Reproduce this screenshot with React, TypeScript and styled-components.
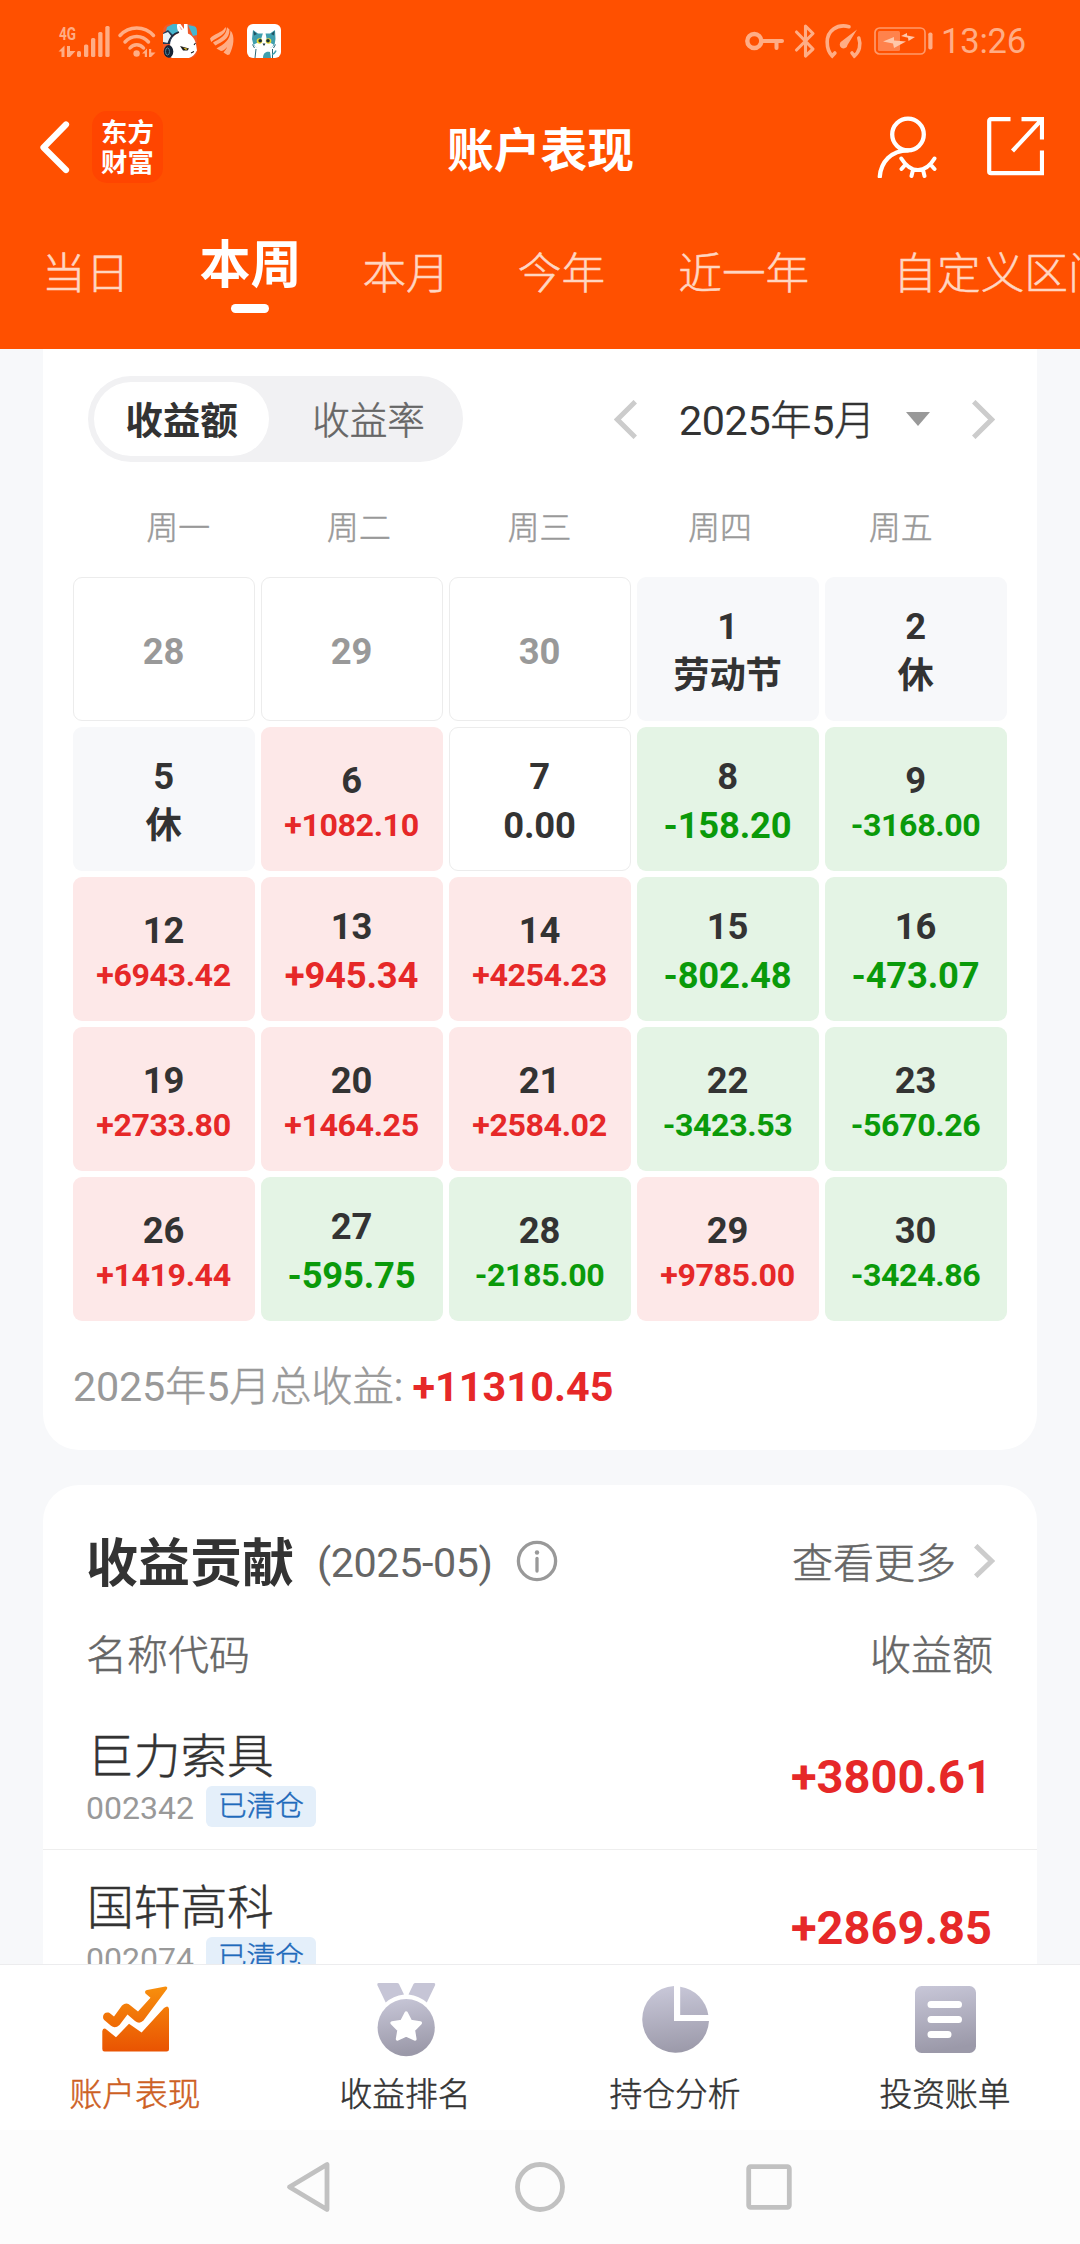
import React from "react";
import styled, { createGlobalStyle, css } from "styled-components";

const Global = createGlobalStyle`
  * { box-sizing: border-box; }
  html, body { margin: 0; padding: 0; }
  body {
    font-family: Roboto, "Noto Sans CJK SC", sans-serif;
    color: #333;
    background: #f7f8fa;
  }
`;

/* light Han strokes, thickened a little */
const hanText = css`
  font-weight: 300;
  -webkit-text-stroke: 0.5px currentColor;
`;

const Screen = styled.div`
  width: 1080px;
  height: 2244px;
  display: flex;
  flex-direction: column;
  overflow: hidden;
  background: #f7f8fa;
`;

/* ---------- header ---------- */

const Header = styled.header`
  flex: none;
  height: 349px;
  background: #ff5000;
  color: #fff;
`;

const StatusBar = styled.div`
  height: 80px;
  padding: 22px 54px 0 58px;
  display: flex;
  justify-content: space-between;
  align-items: flex-start;
  color: #ffad85;
`;

const StatusGroup = styled.div<{ $gap: number }>`
  display: flex;
  align-items: center;
  height: 38px;
  gap: ${(p) => p.$gap}px;
  svg { display: block; flex: none; overflow: visible; }
`;

const Clock = styled.span`
  margin-left: -2px;
  font-size: 34.5px;
  line-height: 38px;
  font-weight: 400;
  letter-spacing: -0.2px;
`;

const TitleBar = styled.div`
  height: 134px;
  padding: 0 36px 0 39px;
  display: grid;
  grid-template-columns: 1fr auto 1fr;
  align-items: center;
`;

const TitleLeft = styled.div`
  display: flex;
  align-items: center;
  gap: 22px;
  svg { display: block; }
`;

const BrandLogo = styled.div`
  width: 71px;
  height: 72px;
  border-radius: 15px;
  background: #ff4500;
  font-size: 26.4px;
  line-height: 30px;
  font-weight: 700;
  padding-top: 7px;
  display: flex;
  flex-direction: column;
  align-items: center;
`;

const PageTitle = styled.h1`
  margin: 0;
  padding: 8px 2px 0 0;
  font-size: 46.7px;
  line-height: 60px;
  font-weight: 700;
`;

const TitleActions = styled.div`
  display: flex;
  justify-content: flex-end;
  gap: 49px;
  svg { display: block; }
`;

const Tabs = styled.nav`
  height: 135px;
  padding-left: 42px;
  display: flex;
  align-items: flex-start;
  overflow: hidden;
`;

const Tab = styled.div<{ $active?: boolean; $after: number }>`
  flex: none;
  margin-right: ${(p) => p.$after}px;
  padding-top: ${(p) => (p.$active ? 22 : 30)}px;
  display: flex;
  flex-direction: column;
  align-items: center;
  line-height: 60px;
  white-space: nowrap;
  ${(p) =>
    p.$active
      ? css`font-size: 51px; font-weight: 700; color: #fff;`
      : css`font-size: 43.7px; color: #ffd6c2; ${hanText}`}
`;

const TabMark = styled.i`
  width: 38px;
  height: 9px;
  margin-top: 8px;
  border-radius: 5px;
  background: #fff;
`;

/* ---------- content ---------- */

const Content = styled.main`
  flex: none;
  height: 1615px;
  padding: 0 43px;
  overflow: hidden;
`;

const CalendarCard = styled.section`
  height: 1101px;
  padding: 27px 30px 0;
  background: #fff;
  border-radius: 0 0 36px 36px;
`;

const Toolbar = styled.div`
  height: 86px;
  padding: 0 12px 0 15px;
  display: flex;
  align-items: center;
  justify-content: space-between;
`;

const Segment = styled.div`
  width: 375px;
  height: 86px;
  padding: 6px;
  display: flex;
  border-radius: 43px;
  background: #f1f1f3;
`;

const SegmentItem = styled.div<{ $active?: boolean }>`
  width: ${(p) => (p.$active ? 175 : 188)}px;
  padding: ${(p) => (p.$active ? 0 : "0 0 0 11px")};
  flex: none;
  line-height: 78px;
  text-align: center;
  border-radius: 37px;
  font-size: 37.6px;
  ${(p) =>
    p.$active
      ? css`background: #fff; color: #333; font-weight: 700;`
      : css`color: #666; ${hanText}`}
`;

const MonthPicker = styled.div`
  display: flex;
  align-items: center;
  svg { display: block; flex: none; }
`;

const MonthLabel = styled.div`
  width: 197px;
  margin: 4px 30px 0 42px;
  font-size: 41.3px;
  line-height: 56px;
  letter-spacing: -0.4px;
  white-space: nowrap;
`;

const NextMonth = styled.div`
  margin-left: 42px;
`;

const Han = styled.span`
  ${hanText}
`;

const Weekdays = styled.div`
  margin: 44px 16px 0 15px;
  display: grid;
  grid-template-columns: repeat(5, 1fr);
  text-align: center;
  font-size: 31.8px;
  line-height: 44px;
  color: #999;
  ${hanText}
`;

const DayGrid = styled.div`
  margin-top: 27px;
  display: grid;
  grid-template-columns: repeat(5, 182px);
  grid-auto-rows: 144px;
  gap: 6px;
`;

type Kind = "out" | "rest" | "flat" | "up" | "down";

const cellLook = {
  out: css`background: #fff; border: 1px solid #ececec; color: #999;`,
  flat: css`background: #fff; border: 1px solid #ececec; color: #333;`,
  rest: css`background: #f7f8fa; color: #333;`,
  up: css`background: #fde8e8; color: #e62828;`,
  down: css`background: #e4f4e5; color: #0a9a0a;`,
};

const DayCell = styled.div<{ $kind: Kind }>`
  border: 1px solid transparent;
  background-clip: border-box;
  border-radius: 9px;
  padding: 5px 1px 0 0;
  display: flex;
  flex-direction: column;
  align-items: center;
  justify-content: center;
  font-weight: 700;
  ${(p) => cellLook[p.$kind]}
`;

const DayNumber = styled.div<{ $muted: boolean }>`
  font-size: 36.4px;
  line-height: 49px;
  letter-spacing: -0.2px;
  color: ${(p) => (p.$muted ? "#999" : "#333")};
`;

const DayValue = styled.div<{ $small: boolean }>`
  margin-top: ${(p) => (p.$small ? -3 : 0)}px;
  font-size: ${(p) => (p.$small ? 32.2 : 36.4)}px;
  line-height: ${(p) => (p.$small ? 46 : 50)}px;
  letter-spacing: ${(p) => (p.$small ? -0.4 : -0.2)}px;
  white-space: nowrap;
`;

const Summary = styled.div`
  margin-top: 41px;
  font-size: 41.3px;
  line-height: 50px;
  letter-spacing: -0.2px;
  color: #999;
  white-space: nowrap;
`;

const SummaryValue = styled.span`
  margin-left: 9px;
  font-weight: 700;
  letter-spacing: 0.1px;
  color: #e62828;
`;

const ContributionCard = styled.section`
  margin-top: 35px;
  height: 600px;
  padding-top: 48px;
  background: #fff;
  border-radius: 36px 36px 0 0;
`;

const CardHead = styled.div`
  height: 60px;
  padding: 0 42px 0 43px;
  display: flex;
  align-items: center;
  line-height: 60px;
  svg { display: block; flex: none; margin-bottom: 4px; }
`;

const CardTitle = styled.h2`
  margin: 3px 23px 0 0;
  font-size: 52px;
  font-weight: 700;
`;

const Period = styled.span`
  margin-right: 23px;
  font-size: 41.3px;
  letter-spacing: -0.4px;
  color: #666;
`;

const More = styled.span`
  margin: 2px 18px 0 auto;
  font-size: 41px;
  color: #666;
  ${hanText}
`;

const ColumnLabels = styled.div`
  margin: 38px 44px 18px 43px;
  display: flex;
  justify-content: space-between;
  font-size: 41px;
  line-height: 50px;
  color: #666;
  ${hanText}
`;

const StockRow = styled.div`
  height: 151px;
  padding: 30px 45px 22px 43px;
  display: flex;
  align-items: center;
  justify-content: space-between;
  border-bottom: 1px solid #eee;
`;

const StockName = styled.div`
  padding-left: 1px;
  font-size: 46.7px;
  line-height: 56px;
  ${hanText}
`;

const StockMeta = styled.div`
  margin-top: 1px;
  display: flex;
  align-items: center;
  gap: 12px;
`;

const StockCode = styled.span`
  padding-top: 3px;
  font-size: 32px;
  line-height: 38px;
  color: #999;
`;

const ClosedTag = styled.span`
  width: 110px;
  height: 41px;
  border-radius: 6px;
  background: #e4effa;
  color: #1f6abb;
  font-size: 28.7px;
  line-height: 41px;
  text-align: center;
  ${hanText}
`;

const StockGain = styled.div`
  margin-bottom: 3px;
  font-size: 47px;
  line-height: 56px;
  font-weight: 700;
  color: #e62828;
`;

/* ---------- bottom bars ---------- */

const BottomNav = styled.nav`
  flex: none;
  height: 166px;
  border-top: 1px solid #ececee;
  background: #fff;
  display: grid;
  grid-template-columns: repeat(4, 1fr);
`;

const NavItem = styled.div<{ $active?: boolean }>`
  display: flex;
  flex-direction: column;
  align-items: center;
  font-size: 32.8px;
  line-height: 44px;
  color: ${(p) => (p.$active ? "#cd6023" : "#333")};
  ${hanText}
`;

const NavIcon = styled.div<{ $top: number }>`
  height: 90px;
  margin-bottom: 18px;
  padding-top: ${(p) => p.$top}px;
  svg { display: block; overflow: visible; }
`;

const SystemNav = styled.div`
  flex: none;
  height: 114px;
  padding-right: 3px;
  background: #fcfcfc;
  display: flex;
  align-items: center;
  justify-content: center;
  svg { display: block; }
`;

const SystemKey = styled.div<{ $before?: number }>`
  margin-left: ${(p) => p.$before ?? 0}px;
`;

/* ---------- drawings ---------- */

const SignalIcon = () => (
  <svg width="52" height="34" viewBox="0 0 52 34" fill="currentColor">
    <text x="1" y="16" fontFamily="Roboto" fontWeight="700" fontSize="19" textLength="17" lengthAdjust="spacingAndGlyphs">4G</text>
    <path d="M.5 27.500 6.500 21.500V33H3.500v-5.500zM9 22h3v5h5.500L12 33H9z" />
    <rect x="19" y="27" width="4" height="6" rx="1.500" />
    <rect x="26" y="20.500" width="4.300" height="12.500" rx="1.500" />
    <rect x="33" y="14" width="4.300" height="19" rx="1.500" />
    <rect x="40.200" y="8" width="4.300" height="25" rx="1.500" />
    <rect x="47.300" y="2" width="4.300" height="31" rx="1.500" />
  </svg>
);

const WifiIcon = () => (
  <svg width="37" height="34" viewBox="0 0 37 34" fill="none" stroke="currentColor" strokeWidth="3.500" strokeLinecap="round">
    <path d="M2 11.500C11 1.500 26.500 1.500 35.500 11.500" />
    <path d="M7 18c6.500-7.500 17-7.500 23.500 0" />
    <path d="M12 24c3.500-4.500 10-4.500 13.500 0" />
    <circle cx="18.600" cy="29.500" r="3.200" fill="currentColor" stroke="none" />
    <path d="M24 29.500 29 24.500V33h-2.200v-3.500zM31 25h2.200v3.500H37.500L33 33H31z" fill="currentColor" stroke="none" />
  </svg>
);

const RabbitIcon = () => (
  <svg width="34" height="34" viewBox="0 0 34 34">
    <defs>
      <clipPath id="rabbitClip"><rect width="34" height="34" rx="7" /></clipPath>
    </defs>
    <g clipPath="url(#rabbitClip)">
      <rect width="34" height="34" fill="#ee5a2c" />
      <path d="M4 3 10 0h4l1 8-7 4-5-5zM25 1l9 2v8l-4 1z" fill="#46b6cf" />
      <path d="M0 9 5 6l6 6-3 8H0z" fill="#273a55" />
      <path d="M0 10 5 8l4 5-4 6-5-1z" fill="#e9f2f5" />
      <path d="M16 10C15 7 13 2 14.500 0h3L21 5V0h3.500l.5 10z" fill="#fff" />
      <path d="M18 6 16 1.500l3.500 4z" fill="#f1a9a4" />
      <path d="M7 22C7 13 13 8.500 20 8.500c7 0 12 5 13 12l1 6c-3 6-7 8-12 8H9c-3-4-2-9-2-12.500z" fill="#fff" />
      <path d="M5 20c2-8 6-10.500 11-12" fill="none" stroke="#1d2b3e" strokeWidth="1.500" />
      <ellipse cx="5.500" cy="27.500" rx="4.800" ry="6.500" fill="#172536" />
      <ellipse cx="4.500" cy="27.500" rx="2" ry="3.600" fill="none" stroke="#4c8198" strokeWidth="1" />
      <path d="M17 22 26 24.500 24.500 26.500H20z" fill="#1b1b1b" />
      <path d="M20 23.500 24.500 24.700 23 26z" fill="#f2cf2b" />
      <path d="M31 21l1.500-2M28 29l3-1.500" stroke="#1b1b1b" strokeWidth="1.100" />
    </g>
  </svg>
);

const WingIcon = () => (
  <svg width="24" height="28" viewBox="0 0 24 28" fill="currentColor">
    <path d="M0 11.500C4 6.500 12 6 15 .800L16 .300C16.500 8 8 9.500 1.200 15z" />
    <path d="M3 15.500C10 11.500 16 9.500 17 .300L19.500 2.500C19.500 12.500 12 14.500 5.500 18.500L4 17z" />
    <path d="M6.500 21.500C14 17 20 13.500 20.500 3.500 25.500 9 23.500 20 19.500 27.500L17.500 28 13.500 25.500C15 23.500 16.500 22 17 20c-2 2.500-4 4-6 4z" />
  </svg>
);

const CatIcon = () => (
  <svg width="34" height="34" viewBox="0 0 34 34">
    <rect width="34" height="34" rx="6" fill="#fff" />
    <path d="M6 6l5 3.500h12L28 6l.5 9-1 6-4 3h-13l-4-3L5 15z" fill="#3f9fae" />
    <path d="M6.500 7 10 10l-3 1.500zM27.500 7 24 10l3 1.500z" fill="#1f5364" />
    <path d="M16 9h2.500l1.500 8 6.500 3.500C25 24.500 21 25 17 25s-8-.5-10-4.500l6.500-3.500z" fill="#fff" />
    <circle cx="12.500" cy="17" r="2.800" fill="#e6d83a" />
    <circle cx="21.500" cy="17" r="2.800" fill="#e6d83a" />
    <circle cx="13.200" cy="16.800" r="1.800" fill="#172e38" />
    <circle cx="21" cy="16.800" r="1.800" fill="#172e38" />
    <path d="M15.500 19.500h3L17 22z" fill="#172e38" />
    <path d="M5.500 20.500l2 3.500M28.500 20.500l-2 3.500M9 25l-1 9M25.500 25v9" stroke="#2d6877" strokeWidth="1" fill="none" />
    <path d="M16 34c0-5 3-7 7-6l1 6z" fill="#3f9fae" />
    <path d="M25 30.500c3-1 3-2 4-4" stroke="#3f9fae" strokeWidth="1.500" fill="none" />
  </svg>
);

const KeyIcon = () => (
  <svg width="39" height="20" viewBox="0 0 39 20" fill="none" stroke="currentColor" strokeWidth="4.400">
    <circle cx="9.300" cy="10" r="7" />
    <path d="M17 10h20" strokeLinecap="round" strokeWidth="4" />
    <path d="M31.500 10v7" strokeLinecap="round" strokeWidth="4" />
  </svg>
);

const BluetoothIcon = () => (
  <svg width="20" height="34" viewBox="0 0 20 34" fill="none" stroke="currentColor" strokeWidth="3.100" strokeLinejoin="round" strokeLinecap="round">
    <path d="M1.500 8 18 25l-7.500 7V2L18 9.500 1.500 26" />
  </svg>
);

const GaugeIcon = () => (
  <svg width="38" height="36" viewBox="0 0 38 36" fill="none" stroke="currentColor" strokeWidth="3.600" strokeLinecap="round">
    <path d="M24 3.700C12 .500 2.200 8 2.200 19c0 6 2 11 5 14l2.700-3" />
    <path d="M33.800 15c2.500 7 .5 14-4.500 18l-2.300-3" />
    <path d="M32 6.500 22.500 22a3.900 3.900 0 1 1-5.500-4z" fill="currentColor" stroke="none" />
  </svg>
);

const BatteryIcon = () => (
  <svg width="59" height="28" viewBox="0 0 59 28">
    <rect x="1" y="1" width="50" height="26" rx="4.500" fill="none" stroke="#ff9a6a" strokeWidth="1.700" />
    <rect x="4" y="4" width="22" height="20" rx="1.500" fill="#ff824c" />
    <path d="M9 14.500 20 10v3.500l12 1L20 21l-1-4.500zM27 9l6-3v2.500l8 1.500-6.500 4-.5-3.200z" fill="#ffc7aa" />
    <rect x="54.300" y="5.500" width="4.200" height="17" rx="1.800" fill="currentColor" />
  </svg>
);

const BackIcon = () => (
  <svg width="31" height="54" viewBox="0 0 31 54" fill="none" stroke="#fff" strokeWidth="6.200" strokeLinecap="round" strokeLinejoin="round">
    <path d="M27 4.500 4.500 27.500 27 50" />
  </svg>
);

const HiddenUserIcon = () => (
  <svg width="60" height="62" viewBox="0 0 60 62" fill="none" stroke="#fff" strokeWidth="4.300" strokeLinecap="round">
    <circle cx="31" cy="18.500" r="15.800" />
    <path d="M31 34.300C14 34.500 4 46 2.800 60.500" />
    <path d="M24.300 42.500C29 50 34 54 41 54s12-4 16.500-11.500M28.500 48.500l-4 4.500M36 54l-1.500 6M46 54l1.500 6M53.500 48.500l4 4.500" strokeWidth="4" />
  </svg>
);

const ShareIcon = () => (
  <svg width="58" height="60" viewBox="0 0 58 60" fill="none" stroke="#fff" strokeWidth="4.200">
    <path d="M24.500 3.200H5Q3.200 3.200 3.200 5v50.500Q3.200 57.200 5 57.200h51V34.500M35.500 3.200H56V23.500M56 3.200 26.500 35" />
  </svg>
);

const Chevron = ({ h, w, flip }: { h: number; w: number; flip?: boolean }) => (
  <svg width={w} height={h} viewBox={`0 0 ${w} ${h}`} fill="none" stroke="#ccc" strokeWidth="5">
    <path
      d={
        flip
          ? `M${w - 1.7} 1.7 3.4 ${h / 2} ${w - 1.7} ${h - 1.7}`
          : `M1.7 1.7 ${w - 3.4} ${h / 2} 1.7 ${h - 1.7}`
      }
    />
  </svg>
);

const CaretDown = () => (
  <svg width="24" height="14" viewBox="0 0 24 14">
    <path d="M0 0h24L12 14z" fill="#999" />
  </svg>
);

const InfoIcon = () => (
  <svg width="42" height="42" viewBox="0 0 42 42" fill="none" stroke="#999" strokeWidth="3.300">
    <circle cx="21" cy="21" r="18.600" />
    <circle cx="21" cy="12.500" r="2.200" fill="#999" stroke="none" />
    <path d="M21 18.500v12.500" strokeLinecap="round" />
  </svg>
);

const GreyFade = ({ id }: { id: string }) => (
  <defs>
    <linearGradient id={id} x1="0" y1="0" x2="0.15" y2="1">
      <stop offset="0" stopColor="#c8c7d8" />
      <stop offset="1" stopColor="#9b99a9" />
    </linearGradient>
  </defs>
);

const TrendIcon = () => (
  <svg width="67" height="66" viewBox="0 0 67 66" fill="url(#trendFade)">
    <defs>
      <linearGradient id="trendFade" gradientUnits="userSpaceOnUse" x1="33" y1="0" x2="33" y2="66">
        <stop offset="0" stopColor="#f8900d" />
        <stop offset="1" stopColor="#e95302" />
      </linearGradient>
    </defs>
    <path d="M1 31C1 28 4 25.500 7.600 27L12 30.500 20 19.500Q24.500 15.500 28.500 19.500L36 25.500 48.500 11.700 43.500 7.500Q42 5 45 4L63.500.500Q66 .500 65 3L41.500 34.500Q37.500 38.500 33 35L25.500 28.500 17.500 39Q13 43 9 39.700L2.200 34Q1 33 1 31z" />
    <path d="M.3 45Q1 42 3.500 42.700L14 51.300 27 37.700 39.600 46.500 62 22Q66.500 18.500 67 23V63Q67 65.500 64.500 65.500H2.500Q.3 65.500.3 63z" />
  </svg>
);

const MedalIcon = () => (
  <svg width="57" height="73" viewBox="1 0 57 73">
    <GreyFade id="medalFade" />
    <path d="M2.500 0H21Q22.500 0 23 1L28 11.500Q17 13 9.700 19.500L1.300 2Q1 0 2.500 0zM58 0H39.500Q38 0 37.500 1L32.500 11.500Q43.500 13 50.800 19.500L59.200 2Q59.500 0 58 0z" fill="#c6c5d6" />
    <circle cx="30.200" cy="44.600" r="28.600" fill="url(#medalFade)" />
    <path d="M30.200 30 34.600 38.500 44.300 40 37.400 47 38.900 56 30.200 52 21.500 56 23 47 16.100 40 25.800 38.500z" fill="#fff" stroke="#fff" strokeWidth="3.400" strokeLinejoin="round" />
  </svg>
);

const PieIcon = () => (
  <svg width="67" height="67" viewBox="0 0 67 67" fill="url(#pieFade)">
    <defs>
      <linearGradient id="pieFade" gradientUnits="userSpaceOnUse" x1="30" y1="0" x2="38" y2="67">
        <stop offset="0" stopColor="#c8c7d8" />
        <stop offset="1" stopColor="#9b99a9" />
      </linearGradient>
    </defs>
    <path d="M32 0A33.400 33.400 0 1 0 67 35H32z" />
    <path d="M38.200.700A33.400 33.400 0 0 1 66.300 29H38.200z" />
  </svg>
);

const BillIcon = () => (
  <svg width="61" height="67" viewBox="0 0 61 67">
    <GreyFade id="billFade" />
    <rect width="61" height="67" rx="6.500" fill="url(#billFade)" />
    <path d="M16 18.500h27.500M16 33.500h27.500M16 48.500h17" stroke="#fff" strokeWidth="7" strokeLinecap="round" />
  </svg>
);

/* ---------- data ---------- */

const tabs = [
  { label: "当日", after: 70 },
  { label: "本周", after: 61, active: true },
  { label: "本月", after: 68 },
  { label: "今年", after: 73 },
  { label: "近一年", after: 84 },
  { label: "自定义区间", after: 0 },
];

const days: [string, string, Kind][] = [
  ["28", "", "out"], ["29", "", "out"], ["30", "", "out"], ["1", "劳动节", "rest"], ["2", "休", "rest"],
  ["5", "休", "rest"], ["6", "+1082.10", "up"], ["7", "0.00", "flat"], ["8", "-158.20", "down"], ["9", "-3168.00", "down"],
  ["12", "+6943.42", "up"], ["13", "+945.34", "up"], ["14", "+4254.23", "up"], ["15", "-802.48", "down"], ["16", "-473.07", "down"],
  ["19", "+2733.80", "up"], ["20", "+1464.25", "up"], ["21", "+2584.02", "up"], ["22", "-3423.53", "down"], ["23", "-5670.26", "down"],
  ["26", "+1419.44", "up"], ["27", "-595.75", "down"], ["28", "-2185.00", "down"], ["29", "+9785.00", "up"], ["30", "-3424.86", "down"],
];

const stocks = [
  { name: "巨力索具", code: "002342", gain: "+3800.61" },
  { name: "国轩高科", code: "002074", gain: "+2869.85" },
];

const navItems = [
  { label: "账户表现", icon: <TrendIcon />, active: true, top: 21 },
  { label: "收益排名", icon: <MedalIcon />, top: 18 },
  { label: "持仓分析", icon: <PieIcon />, top: 21 },
  { label: "投资账单", icon: <BillIcon />, top: 21 },
];

export default function App() {
  return (
    <Screen>
      <Global />
      <Header>
        <StatusBar>
          <StatusGroup $gap={8}>
            <SignalIcon />
            <WifiIcon />
            <StatusGroup $gap={13}>
              <RabbitIcon />
              <WingIcon />
              <CatIcon />
            </StatusGroup>
          </StatusGroup>
          <StatusGroup $gap={10.5}>
            <KeyIcon />
            <BluetoothIcon />
            <GaugeIcon />
            <BatteryIcon />
            <Clock>13:26</Clock>
          </StatusGroup>
        </StatusBar>
        <TitleBar>
          <TitleLeft>
            <BackIcon />
            <BrandLogo>
              <span>东方</span>
              <span>财富</span>
            </BrandLogo>
          </TitleLeft>
          <PageTitle>账户表现</PageTitle>
          <TitleActions>
            <HiddenUserIcon />
            <ShareIcon />
          </TitleActions>
        </TitleBar>
        <Tabs>
          {tabs.map((t) => (
            <Tab key={t.label} $active={t.active} $after={t.after}>
              {t.label}
              {t.active && <TabMark />}
            </Tab>
          ))}
        </Tabs>
      </Header>

      <Content>
        <CalendarCard>
          <Toolbar>
            <Segment>
              <SegmentItem $active>收益额</SegmentItem>
              <SegmentItem>收益率</SegmentItem>
            </Segment>
            <MonthPicker>
              <Chevron w={23} h={39} flip />
              <MonthLabel>
                2025<Han>年</Han>5<Han>月</Han>
              </MonthLabel>
              <CaretDown />
              <NextMonth>
                <Chevron w={23} h={39} />
              </NextMonth>
            </MonthPicker>
          </Toolbar>
          <Weekdays>
            {["周一", "周二", "周三", "周四", "周五"].map((d) => (
              <span key={d}>{d}</span>
            ))}
          </Weekdays>
          <DayGrid>
            {days.map(([day, value, kind], i) => (
              <DayCell key={i} $kind={kind}>
                <DayNumber $muted={kind === "out"}>{day}</DayNumber>
                {value && <DayValue $small={value.length > 7}>{value}</DayValue>}
              </DayCell>
            ))}
          </DayGrid>
          <Summary>
            2025<Han>年</Han>5<Han>月总收益</Han>:<SummaryValue>+11310.45</SummaryValue>
          </Summary>
        </CalendarCard>

        <ContributionCard>
          <CardHead>
            <CardTitle>收益贡献</CardTitle>
            <Period>(2025-05)</Period>
            <InfoIcon />
            <More>查看更多</More>
            <Chevron w={21} h={34} />
          </CardHead>
          <ColumnLabels>
            <span>名称代码</span>
            <span>收益额</span>
          </ColumnLabels>
          {stocks.map((s) => (
            <StockRow key={s.code}>
              <div>
                <StockName>{s.name}</StockName>
                <StockMeta>
                  <StockCode>{s.code}</StockCode>
                  <ClosedTag>已清仓</ClosedTag>
                </StockMeta>
              </div>
              <StockGain>{s.gain}</StockGain>
            </StockRow>
          ))}
        </ContributionCard>
      </Content>

      <BottomNav>
        {navItems.map((n) => (
          <NavItem key={n.label} $active={n.active}>
            <NavIcon $top={n.top}>{n.icon}</NavIcon>
            {n.label}
          </NavItem>
        ))}
      </BottomNav>
      <SystemNav>
        <SystemKey>
          <svg width="46" height="54" viewBox="0 0 46 54" fill="none" stroke="#c1c1c1" strokeWidth="4.800" strokeLinejoin="round">
            <path d="M42 4.500v45L4.500 27z" />
          </svg>
        </SystemKey>
        <SystemKey $before={182}>
          <svg width="54" height="54" viewBox="0 0 54 54" fill="none" stroke="#c1c1c1" strokeWidth="4.800">
            <circle cx="27" cy="27" r="22.500" />
          </svg>
        </SystemKey>
        <SystemKey $before={179}>
          <svg width="46" height="46" viewBox="0 0 46 46" fill="none" stroke="#c1c1c1" strokeWidth="4.800">
            <rect x="2.700" y="2.700" width="40.600" height="40.600" rx="2" />
          </svg>
        </SystemKey>
      </SystemNav>
    </Screen>
  );
}
